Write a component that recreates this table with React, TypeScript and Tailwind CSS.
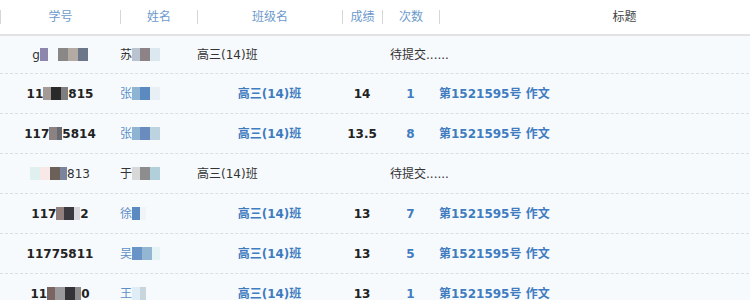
import { ReactNode } from "react";

type Seg = string | [string, number];

interface Row {
  id: Seg[];
  name: Seg[];
  nameBlue?: boolean;
  pending?: boolean;
  score?: string;
  count?: string;
}

const rows: Row[] = [
  { id: ["g", ["#8d86ad", 8], ["transparent", 10], ["#8a8787", 10], ["#b4aaa4", 10], ["#6c7689", 10]], name: ["苏", ["#b9c4d0", 8], ["#8d8285", 10], ["#dce8f0", 10]], pending: true },
  { id: ["11", ["#a59b94", 8], ["#2a2a2a", 10], ["#7e7e80", 7], "815"], name: ["张", ["#8fb3d3", 8], ["#5b8ac0", 10], ["#e8f0f5", 10]], nameBlue: true, score: "14", count: "1" },
  { id: ["117", ["#8d8282", 8], ["#686a72", 5], "5814"], name: ["张", ["#8fb3d3", 8], ["#6a8bbd", 10], ["#bed3e0", 10]], nameBlue: true, score: "13.5", count: "8" },
  { id: [["#dff0ee", 10], ["#f8e8e8", 10], ["#6b6158", 10], ["#7a849c", 7], "813"], name: ["于", ["#d8d8d8", 8], ["#8d8d8d", 10], ["#b1d0dc", 10]], pending: true },
  { id: ["117", ["#907f7d", 8], ["#3a3940", 10], ["#d8d8dc", 6], "2"], name: ["徐", ["#5b8ac0", 8], ["#eef4f8", 6]], nameBlue: true, score: "13", count: "7" },
  { id: ["11775811"], name: ["吴", ["#6a93c8", 10], ["#93b7d3", 10], ["#e6f3f5", 8]], nameBlue: true, score: "13", count: "5" },
  { id: ["11", ["#7a6560", 8], ["#9a9a9c", 10], ["#343438", 10], ["#8c8c8c", 6], "0"], name: ["王", ["#dfeef6", 8], ["#c8d5dc", 6]], nameBlue: true, score: "13", count: "1" },
];

function Segs({ segs }: { segs: Seg[] }) {
  return (
    <>
      {segs.map((s, i) =>
        typeof s === "string" ? (
          <span key={i}>{s}</span>
        ) : (
          <span key={i} className="inline-block h-[13px]" style={{ width: s[1], background: s[0] }} />
        )
      )}
    </>
  );
}

function HeadCell({ children, dark }: { children: ReactNode; dark?: boolean }) {
  return (
    <div className="flex items-center h-full">
      <span className="w-px h-[14px] bg-[#d6d6d6]" />
      <span className={`flex-1 text-center ${dark ? "text-[#444]" : "text-[#6d9acb]"}`}>{children}</span>
    </div>
  );
}

const cols = "grid grid-cols-[120px_77px_145px_40px_57px_370px]";

export default function App() {
  return (
    <div className="w-[750px] h-[300px] overflow-hidden bg-[#f7fafd]">
      <div className="w-[809px] text-[12px] font-['DejaVu_Sans','Noto_Sans_CJK_SC',sans-serif]">
        <div className={`${cols} h-[36px] bg-white border-b-2 border-[#e2e2e2]`}>
          <HeadCell>学号</HeadCell>
          <HeadCell>姓名</HeadCell>
          <HeadCell>班级名</HeadCell>
          <HeadCell>成绩</HeadCell>
          <HeadCell>次数</HeadCell>
          <HeadCell dark>标题</HeadCell>
        </div>
        {rows.map((r, i) => (
          <div
            key={i}
            className={`${cols} items-center border-b border-dashed border-[#d9dee3] ${i === 0 ? "h-[38px]" : "h-[40px]"}`}
          >
            <div className={`flex items-center justify-center ${r.pending ? "text-[#333]" : "font-bold text-[#222]"}`}>
              <Segs segs={r.id} />
            </div>
            <div className={`flex items-center ${r.nameBlue ? "text-[#5d8fc6]" : "text-[#333]"}`}>
              <Segs segs={r.name} />
            </div>
            {r.pending ? (
              <>
                <div className="text-[#333]">高三(14)班</div>
                <div className="col-span-3 pl-[48px] text-[#333]">待提交......</div>
              </>
            ) : (
              <>
                <div className="text-center font-bold text-[#3f7cc0]">高三(14)班</div>
                <div className="text-center font-bold text-[#222]">{r.score}</div>
                <div className="text-center font-bold text-[#3f7cc0]">{r.count}</div>
                <div className="font-bold text-[#3f7cc0]">第1521595号 作文</div>
              </>
            )}
          </div>
        ))}
      </div>
    </div>
  );
}
